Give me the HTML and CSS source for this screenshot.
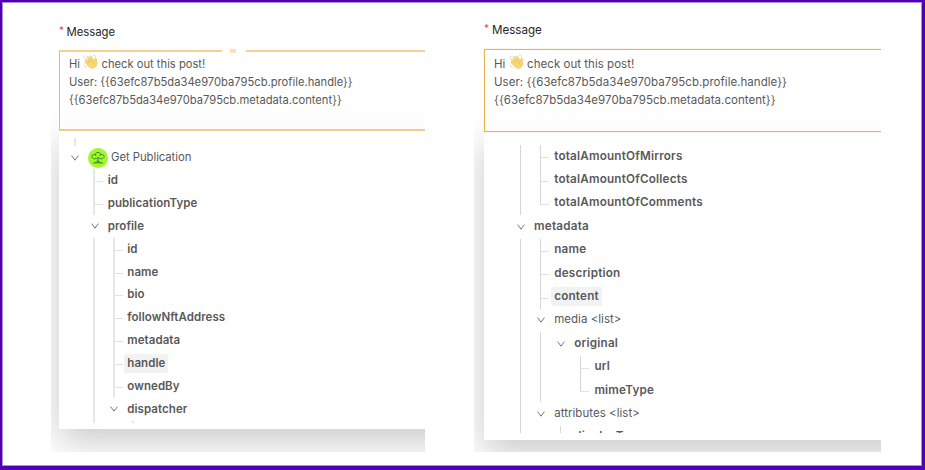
FILE: index.html
```html
<!DOCTYPE html>
<html lang="en">
<head>
<meta charset="utf-8">
<title>Message</title>
<link rel="stylesheet" href="styles.css">
</head>
<body>
<svg width="0" height="0" class="defs">
  <symbol id="chev" viewBox="0 0 10 10"><path d="M1.6 2.6 5 7.2 8.4 2.6" fill="none" stroke="#777" stroke-width="1"/></symbol>
  <symbol id="wave" viewBox="0 0 16 16">
    <path d="M3.2 5.2 6.8 9 4.1 3.4Q4 2.2 5.2 2.5L8.7 6.6 6.9 2.8Q7 1.6 8.1 2L11.6 7 11.9 4.4Q12.8 3.3 13.5 4.8L14 9.4Q13.8 13.2 10.4 14.3 7.6 14.8 5.6 12.4L1.9 8.4Q1.8 7.2 3 7.4L5 9.3 2.2 6Q2.2 4.8 3.2 5.2Z" fill="#f8d874" stroke="#efc766" stroke-width=".6"/>
    <path d="M6.8 9 5 6.8M8.7 8 6.8 5.2M11.6 7Q9.8 8.6 11 10.8" fill="none" stroke="#e3b65c" stroke-width=".6"/>
    <path d="M1 4.5Q1.2 2.4 3 1.7M10 1.2Q12 1.2 12.8 2.8M1 10.8Q1.6 13 3.6 13.6" fill="none" stroke="#c9ccd3" stroke-width=".8"/>
  </symbol>
</svg>
<main class="frame">
  <section class="shot shot-a">
    <label class="label"><span class="req">*</span>Message</label>
    <div class="box">
      <p>Hi <svg class="wave"><use href="#wave"/></svg> check out this post!</p>
      <p>User: {{63efc87b5da34e970ba795cb.profile.handle}}</p>
      <p>{{63efc87b5da34e970ba795cb.metadata.content}}</p>
    </div>
    <div class="drop"><div class="tree">
      <div class="row stub"><i class="c line"></i></div>
      <div class="row"><i class="c"><svg><use href="#chev"/></svg></i><svg class="lens" viewBox="0 0 20 20"><circle cx="10" cy="10" r="10" fill="#a4f72c"/><g fill="none" stroke="#2f8422" stroke-width=".9"><path d="M10 9.5C7 12 3.2 10.5 4 8 4.4 6.4 6.3 6 7.3 7 7 3.6 13 3.6 12.7 7 13.7 6 15.6 6.4 16 8 16.8 10.5 13 12 10 9.5ZM7.3 7 8.4 8.1M12.7 7 11.6 8.1M10 9.5V14.6M5 15.2Q8.3 15.2 10 12.6 11.7 15.2 15 15.2M7 14.8H13"/></g></svg><span class="t plain root">Get Publication</span></div>
      <div class="row"><i class="c"></i><i class="c line tick"></i><span class="t">id</span></div>
      <div class="row"><i class="c"></i><i class="c line tick"></i><span class="t">publicationType</span></div>
      <div class="row"><i class="c"></i><i class="c"><svg><use href="#chev"/></svg></i><span class="t">profile</span></div>
      <div class="row"><i class="c"></i><i class="c line"></i><i class="c line tick"></i><span class="t">id</span></div>
      <div class="row"><i class="c"></i><i class="c line"></i><i class="c line tick"></i><span class="t">name</span></div>
      <div class="row"><i class="c"></i><i class="c line"></i><i class="c line tick"></i><span class="t">bio</span></div>
      <div class="row"><i class="c"></i><i class="c line"></i><i class="c line tick"></i><span class="t">followNftAddress</span></div>
      <div class="row"><i class="c"></i><i class="c line"></i><i class="c line tick"></i><span class="t">metadata</span></div>
      <div class="row"><i class="c"></i><i class="c line"></i><i class="c line tick"></i><span class="t on">handle</span></div>
      <div class="row"><i class="c"></i><i class="c line"></i><i class="c line tick"></i><span class="t">ownedBy</span></div>
      <div class="row"><i class="c"></i><i class="c line"></i><i class="c"><svg><use href="#chev"/></svg></i><span class="t">dispatcher</span></div>
      <div class="row"><i class="c"></i><i class="c line"></i><i class="c"></i><i class="c line"></i></div>
    </div></div>
  </section>
  <section class="shot shot-b">
    <label class="label"><span class="req">*</span>Message</label>
    <div class="box">
      <p>Hi <svg class="wave"><use href="#wave"/></svg> check out this post!</p>
      <p>User: {{63efc87b5da34e970ba795cb.profile.handle}}</p>
      <p>{{63efc87b5da34e970ba795cb.metadata.content}}</p>
    </div>
    <div class="drop"><div class="tree">
      <div class="row"><i class="c line"></i><i class="c line tick"></i><span class="t">totalAmountOfMirrors</span></div>
      <div class="row"><i class="c line"></i><i class="c line tick"></i><span class="t">totalAmountOfCollects</span></div>
      <div class="row"><i class="c line"></i><i class="c line tick last"></i><span class="t">totalAmountOfComments</span></div>
      <div class="row"><i class="c"><svg><use href="#chev"/></svg></i><span class="t">metadata</span></div>
      <div class="row"><i class="c line"></i><i class="c line tick"></i><span class="t">name</span></div>
      <div class="row"><i class="c line"></i><i class="c line tick"></i><span class="t">description</span></div>
      <div class="row"><i class="c line"></i><i class="c line tick"></i><span class="t on">content</span></div>
      <div class="row"><i class="c line"></i><i class="c"><svg><use href="#chev"/></svg></i><span class="t plain">media &lt;list&gt;</span></div>
      <div class="row"><i class="c line"></i><i class="c line"></i><i class="c"><svg><use href="#chev"/></svg></i><span class="t">original</span></div>
      <div class="row"><i class="c line"></i><i class="c line"></i><i class="c"></i><i class="c line tick"></i><span class="t">url</span></div>
      <div class="row"><i class="c line"></i><i class="c line"></i><i class="c"></i><i class="c line tick last"></i><span class="t">mimeType</span></div>
      <div class="row"><i class="c line"></i><i class="c"><svg><use href="#chev"/></svg></i><span class="t plain">attributes &lt;list&gt;</span></div>
      <div class="row"><i class="c line"></i><i class="c"></i><i class="c line"></i><span class="t">displayType</span></div>
    </div></div>
  </section>
</main>
</body>
</html>
```
FILE: styles.css
```css
* { box-sizing: border-box; }
body { margin: 0; font-family: Inter, "Liberation Sans", sans-serif; font-size: 11.5px; color: #595959; background: #fff; }
.defs { position: absolute; }
.frame {
  width: 925px; height: 470px; overflow: hidden;
  display: flex; align-items: flex-start;
  border: solid #5000b4; border-width: 2px 3px 4px 2px;
  box-shadow: inset 0 0 0 1px #b08be0;
  padding-left: 49px; gap: 49px;
}
.shot { height: 450px; overflow: hidden; display: flex; flex-direction: column; }
.shot-a { width: 374px; padding-left: 8px; --step: 19.6px; --row: 22.86px; --guide: #e6e6e6; --gw: 2px; --gx: 8px; }
.shot-b { width: 407px; padding-left: 10px; --step: 20.1px; --row: 23.4px; --guide: #d6d6d6; --gw: 1px; --gx: 9px; }
.label { height: 48px; flex: none; padding-top: 23px; line-height: 14px; color: #262626; font-size: 11.3px; display: flex; }
.shot-b .label { height: 47px; padding-top: 21px; font-size: 11.6px; }
.req { color: #f04b50; width: 8px; font-size: 10px; line-height: 11px; }
.shot-a .req { width: 7.5px; }
.box { position: relative; z-index: 1; flex: none; height: 81px; width: 420px; padding: 5px 0 0 9px; background: linear-gradient(#fff 70%, #fcfcfc); }
.shot-a .box { border: 2px solid #f0cd88; border-top-color: #f9d18f; border-left: 1px solid #efb95c; font-size: 11.2px; padding-top: 3px; }
.shot-b .box { border: 1px solid #f0b04c; box-shadow: 0 0 1px #f5c67c; height: 83px; width: 440px; }
.shot-a .box::before { content: ""; position: absolute; left: 162px; top: -3px; width: 24px; height: 4px; background: linear-gradient(90deg, #fff 8px, #fbe1b8 8px, #fbe1b8 14px, #fff 14px); }
.box p { margin: 0; height: 18.2px; line-height: 18px; white-space: pre; display: flex; }
.box p:nth-child(2) { margin-top: -.3px; }
.shot-b .box p { letter-spacing: .03px; }
.wave { width: 16px; height: 16px; margin: -1px -.8px 0 0; }
.drop { width: 500px; flex: none; height: 298px; background: #fff; padding-top: 7px; box-shadow: 0 12px 36px rgba(0,0,0,.22); }
.shot-a .drop { padding-left: 6.5px; }
.shot-b .drop { height: 308px; padding: 13px 0 0 27px; }
.tree { overflow: hidden; height: 285px; }
.shot-b .tree { height: 288px; }
.row { height: var(--row); display: flex; align-items: center; }
.row.stub { height: 8.4px; }
.c { width: var(--step); height: 100%; flex: none; display: flex; align-items: center; }
.c svg { width: 10px; height: 10px; margin-left: 4.5px; }
.line::before { content: ""; width: var(--gw); height: 100%; margin-left: var(--gx); background: var(--guide); }
.last::before { height: 56%; align-self: flex-start; }
.tick::after { content: ""; width: 8px; height: 1px; margin-top: 2px; background: #e2e2e2; }
.t { font-weight: 600; line-height: 19px; padding: 0 3px; white-space: nowrap; letter-spacing: .07px; }
.shot-b .t { font-size: 11.7px; letter-spacing: .2px; margin-top: -1px; }
.shot-b .plain { font-size: 11.5px; letter-spacing: .03px; }
.plain { font-weight: 400; }
.root { font-size: 11.3px; letter-spacing: -.05px; }
.lens { width: 20px; height: 20px; flex: none; margin-left: 3px; }
.on { background: #f2f2f2; border-radius: 2px; }
```
